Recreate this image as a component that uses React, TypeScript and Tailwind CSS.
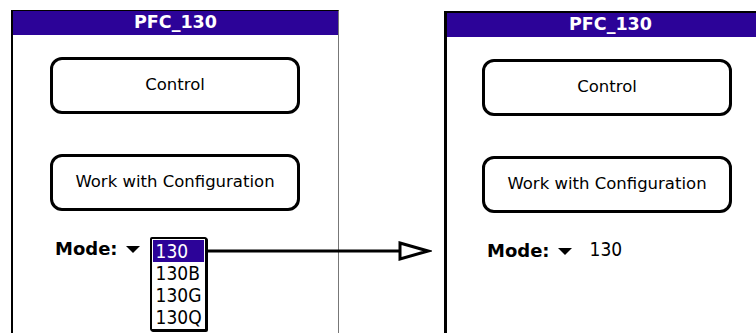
const modes = ["130", "130B", "130G", "130Q"];

function PalmButton({ label }: { label: string }) {
  return (
    <div className="flex h-[57px] w-[250px] items-center justify-center rounded-[12px] border-[3px] border-black text-[16.5px] text-black">
      {label}
    </div>
  );
}

function Panel({ open, className, pad }: { open: boolean; className: string; pad: string }) {
  return (
    <div className={`flex flex-col bg-white ${className}`}>
      <div className="flex h-[24px] items-center justify-center bg-[#2c0398] text-[17.5px] font-bold leading-none text-white">
        PFC_130
      </div>
      <div className={`flex flex-col pt-[22px] ${pad}`}>
        <PalmButton label="Control" />
        <div className="mt-[40px]">
          <PalmButton label="Work with Configuration" />
        </div>
        <div className="ml-[5px] mt-[27px] flex h-[22px] items-center">
          <span className="text-[18px] font-bold leading-none text-black">Mode:</span>
          <span className="ml-[8px] h-0 w-0 border-x-[7px] border-t-[7px] border-x-transparent border-t-black" />
          <div className="relative ml-[18px]">
            {/* the open popup covers the selected value */}
            <span
              className={`font-['Liberation_Sans_Narrow','DejaVu_Sans_Condensed',Roboto,sans-serif] text-[19px] leading-none text-black ${
                open ? "invisible" : ""
              }`}
            >
              130
            </span>
            {open && (
              <div className="absolute left-[-8px] top-[0px] w-[57px] rounded-[2px] border-2 border-black bg-white p-[1px] shadow-[1px_1px_0_#000]">
                {modes.map((m, i) => (
                  <div
                    key={m}
                    className={`h-[22px] pl-[3px] font-['Liberation_Sans_Narrow','DejaVu_Sans_Condensed',Roboto,sans-serif] text-[19px] leading-[22px] ${
                      i === 0 ? "bg-[#2c0398] text-white" : "text-black"
                    }`}
                  >
                    {m}
                  </div>
                ))}
              </div>
            )}
          </div>
        </div>
      </div>
    </div>
  );
}

export default function App() {
  return (
    <div className="relative flex h-[333px] w-[756px] items-start overflow-hidden bg-white font-['DejaVu_Sans',sans-serif]">
      <Panel
        open
        pad="pl-[37px]"
        className="ml-[11px] mt-[10px] h-[323px] w-[328px] shrink-0 border-l-2 border-r border-t border-black border-r-[#777]"
      />
      <Panel
        open={false}
        pad="pl-[35px]"
        className="ml-[105px] mt-[11px] h-[322px] w-[330px] shrink-0 border-l-[3px] border-t-2 border-black"
      />
      <svg
        className="absolute left-[208px] top-[240px]"
        width="224"
        height="24"
        viewBox="0 0 224 24"
      >
        <line x1="0" y1="11" x2="192" y2="11" stroke="black" strokeWidth="3" />
        <polygon points="192,3 220,11 192,19" fill="white" stroke="black" strokeWidth="3" strokeLinejoin="miter" />
      </svg>
    </div>
  );
}
